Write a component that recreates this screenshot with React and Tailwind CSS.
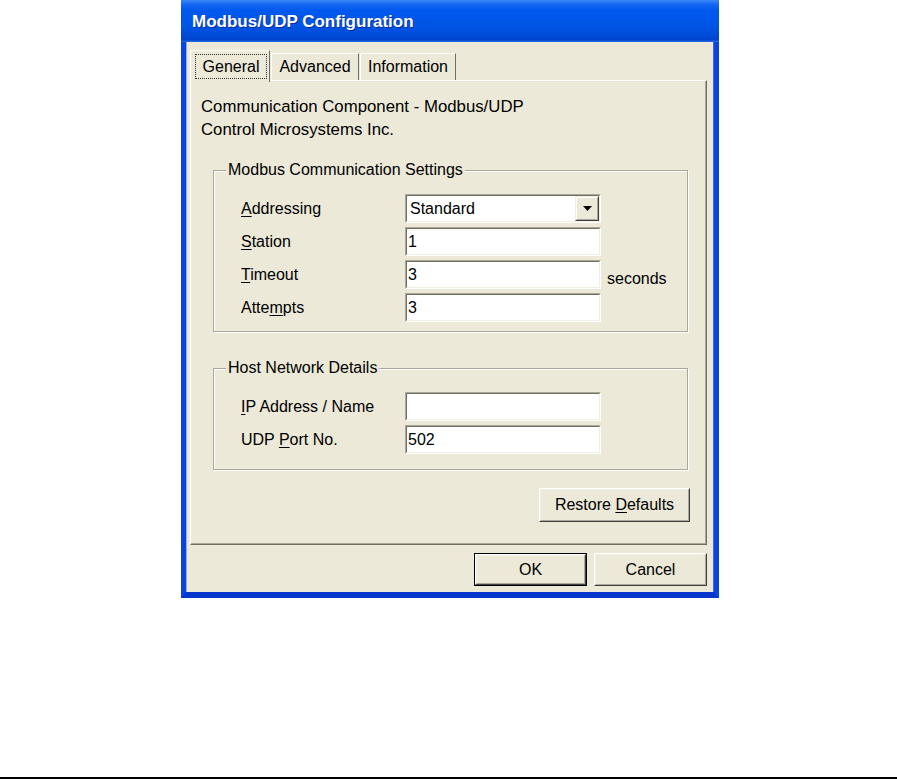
import React from 'react'

const U = ({ children }) => <span className="underline decoration-1 underline-offset-[2px]">{children}</span>

function Field({ children, select }) {
  return (
    <div className="w-[196px] h-[29px] border border-t-[#ACA899] border-l-[#ACA899] border-b-white border-r-white">
      <div className="h-full flex items-center bg-white border border-t-[#716F64] border-l-[#716F64] border-b-[#F1EFE2] border-r-[#F1EFE2]">
        <span className={select ? 'flex-1 pl-[3px]' : 'flex-1 pl-[1px]'}>{children}</span>
        {select && (
          <div className="w-[24px] h-full border border-t-[#F1EFE2] border-l-[#F1EFE2] border-b-[#404040] border-r-[#404040]">
            <div className="h-full flex items-center justify-center bg-[#ECE9D8] border border-t-white border-l-white border-b-[#ACA899] border-r-[#ACA899]">
              <svg width="9" height="5" viewBox="0 0 9 5">
                <polygon points="0,0 9,0 4.5,5" fill="#000" />
              </svg>
            </div>
          </div>
        )}
      </div>
    </div>
  )
}

function Button({ children, className, isDefault }) {
  return (
    <div className={(isDefault ? 'border border-black ' : '') + className}>
      <div className="h-full border border-t-white border-l-white border-b-[#404040] border-r-[#404040]">
        <div className="h-full flex items-center justify-center bg-[#ECE9D8] border border-t-[#F1EFE2] border-l-[#F1EFE2] border-b-[#ACA899] border-r-[#ACA899]">
          <span>{children}</span>
        </div>
      </div>
    </div>
  )
}

function Row({ label, children, after }) {
  return (
    <div className="h-[29px] flex items-center">
      <div className="w-[164px]">{label}</div>
      {children}
      {after && <div className="ml-[6px] mt-[8px]">{after}</div>}
    </div>
  )
}

function Group({ title, className, pb, children }) {
  return (
    <fieldset className={'ml-[22px] w-[475px] border border-[#ACA899] shadow-[1px_1px_0_#fff,inset_1px_1px_0_#fff] ' + className}>
      <legend className="ml-[12px] px-[2px] leading-[20px] bg-[#ECE9D8]">{title}</legend>
      <div className={'pl-[27px] pt-[14px] flex flex-col gap-[4px] ' + pb}>{children}</div>
    </fieldset>
  )
}

export default function App() {
  return (
    <div className="w-[897px] h-[779px] bg-white flex flex-col font-['Liberation_Sans',Arial,sans-serif] text-[16px] leading-[20px] text-black">
      <div className="ml-[181px] w-[538px] h-[598px] flex flex-col">
        {/* title bar */}
        <div className="h-[42px] pl-[11px] pt-[12px] bg-[linear-gradient(to_bottom,#3D8AF7_0%,#1567F2_10%,#0058EE_25%,#0055E5_60%,#0049D6_88%,#0043CC_95%,#2A6FE8_100%)]">
          <span className="text-white font-bold text-[17px] leading-[20px] [text-shadow:1px_1px_0_#0A2A9A]">Modbus/UDP Configuration</span>
        </div>

        {/* frame + client */}
        <div className="flex-1 flex flex-col border-x-[5px] border-b-[6px] border-x-[#0A45E2] border-b-[#0736CC]">
          <div className="flex-1 flex flex-col bg-[#ECE9D8] pt-[8px] pl-[4px] pr-[7px] shadow-[inset_1px_0_0_#8FB0F0,inset_-1px_0_0_#3A6CE6]">
            {/* tabs */}
            <div className="h-[30px] flex items-end">
              <div className="relative z-10 w-[80px] h-[32px] -mb-[2px] bg-[#ECE9D8] border-l border-t border-white rounded-tl-[2px] border-r border-r-[#716F64] pt-[3px] pl-[4px] pr-[2px] pb-[4px]">
                <div className="h-[25px] flex items-center justify-center border border-dotted border-[#333]">General</div>
              </div>
              <div className="ml-[1px] w-[88px] h-[27px] flex items-center justify-center border-l border-t border-white rounded-tl-[2px] border-r border-r-[#716F64]">Advanced</div>
              <div className="ml-[1px] w-[96px] h-[27px] flex items-center justify-center border-l border-t border-white rounded-tl-[2px] border-r border-r-[#716F64]">Information</div>
            </div>

            {/* tab panel */}
            <div className="h-[465px] flex flex-col border-l border-t border-white border-r border-b border-r-[#716F64] border-b-[#716F64]">
              <div className="flex-1 flex flex-col border-r border-b border-r-[#ACA899] border-b-[#ACA899]">
                <div className="pl-[10px] pt-[14px] leading-[23px]">
                  <div className="text-[16.8px]">Communication Component - Modbus/UDP</div>
                  <div className="text-[16.8px]">Control Microsystems Inc.</div>
                </div>

                <Group title="Modbus Communication Settings" className="mt-[19px]" pb="pb-[9px]">
                  <Row label={<><U>A</U>ddressing</>}>
                    <Field select>Standard</Field>
                  </Row>
                  <Row label={<><U>S</U>tation</>}>
                    <Field>1</Field>
                  </Row>
                  <Row label={<><U>T</U>imeout</>} after="seconds">
                    <Field>3</Field>
                  </Row>
                  <Row label={<>Atte<U>m</U>pts</>}>
                    <Field>3</Field>
                  </Row>
                </Group>

                <Group title="Host Network Details" className="mt-[26px]" pb="pb-[15px]">
                  <Row label={<><U>I</U>P Address / Name</>}>
                    <Field></Field>
                  </Row>
                  <Row label={<>UDP <U>P</U>ort No.</>}>
                    <Field>502</Field>
                  </Row>
                </Group>

                <div className="mt-[18px] pr-[15px] flex justify-end">
                  <Button className="w-[151px] h-[34px]">Restore <U>D</U>efaults</Button>
                </div>
              </div>
            </div>

            {/* dialog buttons */}
            <div className="mt-[8px] h-[33px] flex justify-end gap-[7px]">
              <Button isDefault className="w-[113px] h-[33px]">OK</Button>
              <Button className="w-[113px] h-[33px]">Cancel</Button>
            </div>
          </div>
        </div>
      </div>
      <div className="flex-1" />
      <div className="h-[2px] bg-black" />
    </div>
  )
}
